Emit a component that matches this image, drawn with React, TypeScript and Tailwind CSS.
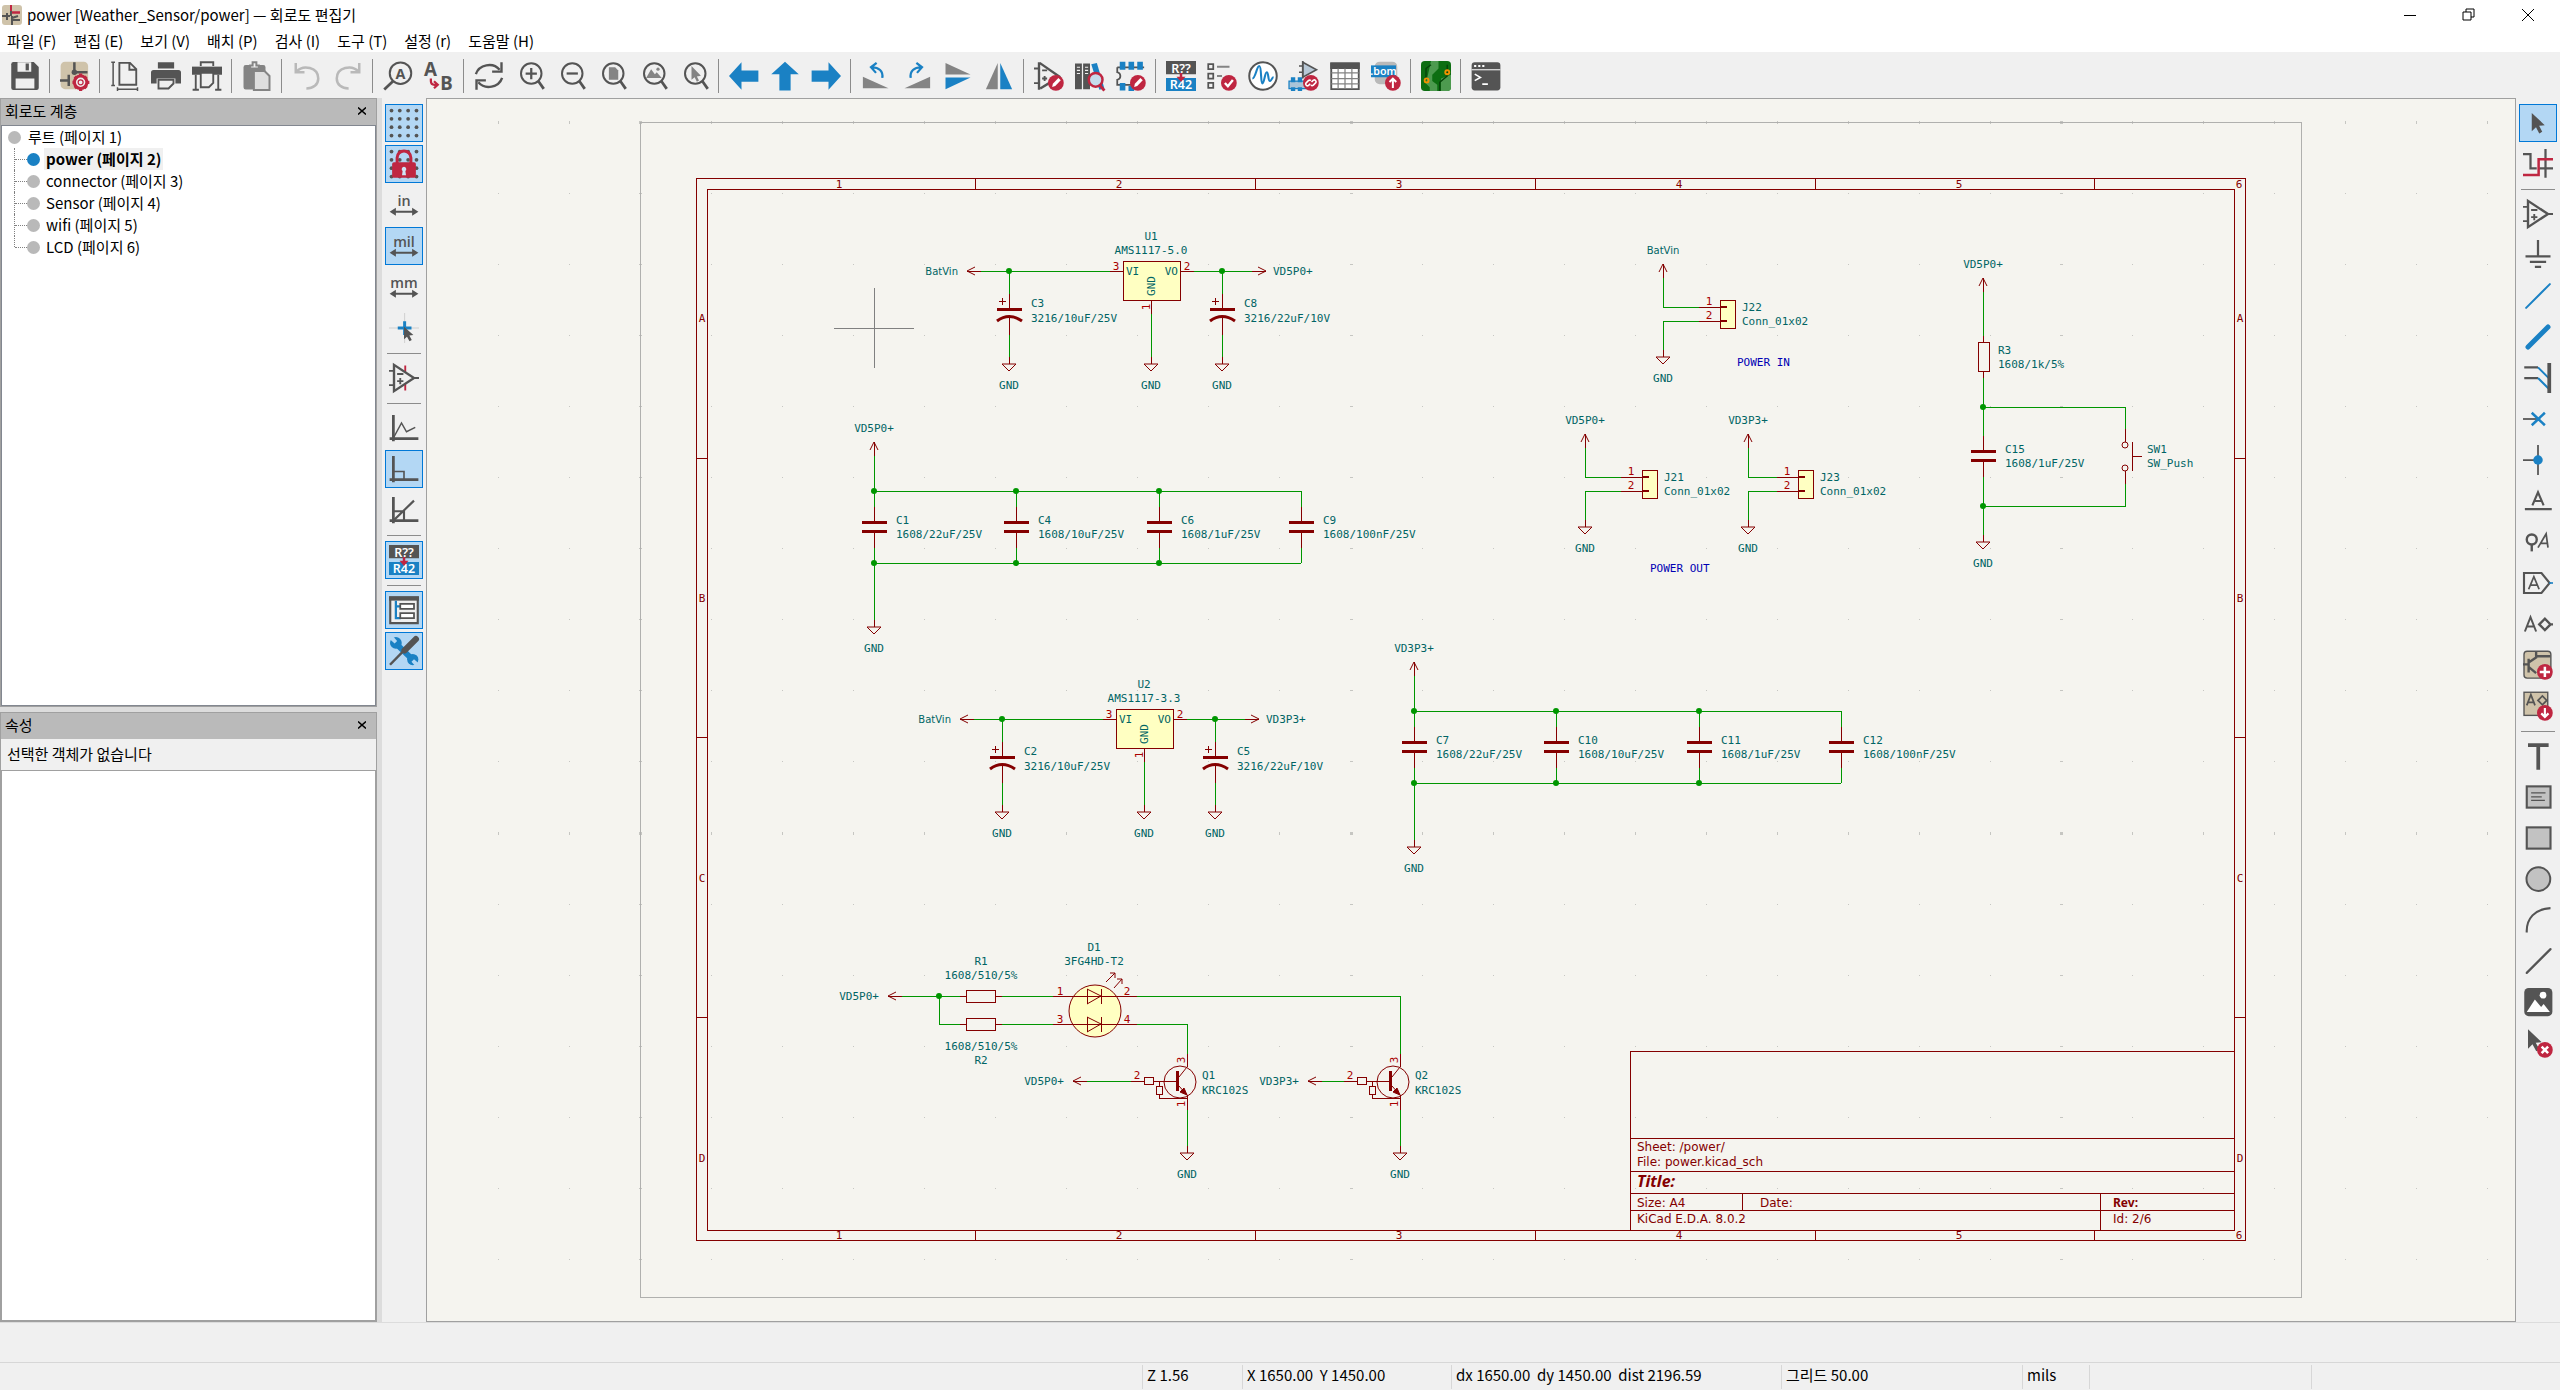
import React from "react";

const D = "#545454";
const B = "#1a81c4";
const R = "#bf2641";
const G = "#848484";
const L = "#b9b9b9";
const TAN = "#cfc3aa";

/* ------------------------------------------------------------------ */
/* Icons                                                               */
/* ------------------------------------------------------------------ */

function Ico({ children }: { children: React.ReactNode }) {
  return (
    <svg viewBox="0 0 24 24" className="size-[30px] shrink-0 overflow-visible" fill="none" stroke={D} strokeWidth={1.6} aria-hidden="true">
      {children}
    </svg>
  );
}

const Badge = ({ kind }: { kind: string }) => (
  <g>
    <circle cx="17.5" cy="17.5" r="6.3" fill={R} stroke="none" />
    {kind === "pencil" && <path d="M14.5 20.8l.6-2.6 4.4-4.6 1.9 1.8-4.4 4.6z" fill="#fff" stroke="none" />}
    {kind === "check" && <path d="M14.3 17.6l2.4 2.6 4-5" stroke="#fff" strokeWidth={1.9} />}
    {kind === "up" && <path d="M17.5 21.5v-7M14.8 16.8l2.7-2.7 2.7 2.7" stroke="#fff" strokeWidth={1.6} />}
    {kind === "down" && <path d="M17.5 13.5v7M14.6 17.9l2.9 2.9 2.9-2.9" stroke="#fff" strokeWidth={1.7} />}
    {kind === "plus" && <path d="M17.5 13.4v8.2M13.4 17.5h8.2" stroke="#fff" strokeWidth={2} />}
    {kind === "x" && <path d="M14.9 14.9l5.2 5.2M20.1 14.9l-5.2 5.2" stroke="#fff" strokeWidth={2} />}
    {kind === "link" && (
      <path d="M17 18.2l-1.5 1.5a1.5 1.5 0 01-2-2l2-2a1.5 1.5 0 012 0M18 16.8l1.5-1.5a1.5 1.5 0 012 2l-2 2a1.5 1.5 0 01-2 0" stroke="#fff" strokeWidth={1.3} />
    )}
  </g>
);

const Lens = () => (
  <g>
    <circle cx="13" cy="10" r="8.2" strokeWidth={1.6} />
    <path d="M18.6 16l4.4 6.3" strokeWidth={2.2} />
  </g>
);

const OpAmp = ({ pins }: { pins?: boolean }) => (
  <g>
    {pins && <path d="M13 2v20" stroke={R} strokeWidth={1.5} />}
    <path d="M4 1.5v21L20 12z" fill="#efefef" strokeWidth={1.9} />
    <path d="M0 6.3h4M0 17.7h4M20 12h4M6.5 8.8h5M6.5 14.5h5M9 12v5" strokeWidth={1.5} />
  </g>
);

const GridDots = () => (
  <g fill={D} stroke="none">
    {[2, 8.6, 15.3, 22].map((y) => [2, 8.6, 15.3, 22].map((x) => <circle key={`${x}-${y}`} cx={x} cy={y} r="1.5" />))}
  </g>
);

const Units = ({ label }: { label: string }) => (
  <g>
    <text x="12" y="12.6" textAnchor="middle" fontSize="11.5" fontWeight="600" fill={D} stroke="none" fontFamily="'Open Sans'">
      {label}
    </text>
    <path d="M3 17.4h18" strokeWidth={1.6} />
    <path d="M5.5 14.2L.5 17.4l5 3.2zM18.5 14.2l5 3.2-5 3.2z" fill={D} stroke="none" />
  </g>
);

const Annotate = () => (
  <g stroke="none" fontFamily="'Noto Sans'" fontWeight="600" fontSize="10">
    <rect width="24" height="10.6" fill={D} />
    <rect y="13.6" width="24" height="10.4" fill={B} />
    <text x="12" y="9.2" textAnchor="middle" fill="#fff">R??</text>
    <text x="12" y="22.6" textAnchor="middle" fill="#fff">R42</text>
    <path d="M11 9.5h2v3h2.6L12 16.8 8.4 12.5H11z" fill={R} />
  </g>
);

const Axes = () => <path d="M3.5 1.5v21M.5 20.5h23" strokeWidth={2.2} />;
const Cursor = () => <path d="M7 4v14.5l3.4-3.2 2.6 5 2.4-1.3-2.5-4.8 4.5-.5z" fill={D} stroke="none" />;

const icons: Record<string, React.ReactNode> = {
  save: (
    <>
      <path d="M1 2.5Q1 .8 2.700 .8H19l4 4v16.700q0 1.700-1.700 1.700H2.700Q1 23.200 1 21.500z" fill={D} stroke="none" />
      <path d="M6 1h11v7.500H6zM4.500 14h15v8h-15z" fill="#efefef" stroke="none" />
      <path d="M12.500 2h2.600v5.500h-2.600z" fill={D} stroke="none" />
    </>
  ),
  settings: (
    <>
      <rect x=".5" y=".5" width="22" height="22" rx="3.500" fill={TAN} stroke="none" />
      <path d="M11.500 1v9M11.500 9H22M0 15.500h8M7 11v9" strokeWidth={2} />
      <circle cx="11.500" cy="9" r="2.200" fill={D} stroke="none" />
      <g stroke={R}>
        <circle cx="16.500" cy="17" r="5" fill="#efefef" stroke={R} strokeWidth={2.500} />
        <path d="M16.500 10v2.500M16.500 21.500V24M10 17h2M21 17h2.500M11.800 12.500l1.800 1.600M19.400 20l1.800 1.600M21.200 12.500l-1.800 1.600M13.600 20l-1.800 1.600" strokeWidth={2.600} />
        <circle cx="16.500" cy="17" r="2" fill="#efefef" strokeWidth={1} />
      </g>
    </>
  ),
  page: (
    <>
      <path d="M7.500 1.500h8.500l5 5v12.500H7.500zM15.500 1.500v5.500H21" strokeWidth={1.500} />
      <path d="M2.500 1v18.500M1 1h3M1 19.500h3M6 22.500h16M6 21v3M22 21v3" strokeWidth={1.200} />
    </>
  ),
  print: (
    <>
      <path d="M5.500 1h13v5h-13z" fill={D} stroke="none" />
      <path d="M2 7.200h20q2 0 2 2V18h-4.500v-4h-15v4H0V9.200q0-2 2-2z" fill={D} stroke="none" />
      <path d="M6 15v7h8l4-4v-3z" fill="#efefef" strokeWidth={1.500} />
    </>
  ),
  plot: (
    <>
      <path d="M7 4V1h10v3" strokeWidth={1.500} />
      <path d="M0 4.500h24V11H0z" fill={D} stroke="none" />
      <path d="M3 11v12M21 11v12M.5 23h5M18.500 23h5" strokeWidth={1.500} />
      <path d="M7 9.500h10v8L13.500 21H7z" fill="#efefef" strokeWidth={1.500} />
    </>
  ),
  paste: (
    <>
      <rect x="2" y="4" width="16" height="18" rx="1" fill={G} stroke={G} />
      <path d="M6.500 6V3.500h2V1h3v2.500h2V6z" fill="#efefef" stroke={G} />
      <path d="M9.500 8h8.500l4 4v11.200H9.500z" fill="#dedede" stroke={G} />
    </>
  ),
  undo: <path d="M3 1.500v7.500h7M3.500 8.500C9 2.500 21 5 21 14c0 5-4 8-9.500 8" stroke={L} strokeWidth={2} />,
  redo: <path d="M21 1.500v7.500h-7M20.500 8.500C15 2.500 3 5 3 14c0 5 4 8 9.500 8" stroke={L} strokeWidth={2} />,
  find: (
    <>
      <circle cx="14" cy="9.700" r="8.600" />
      <path d="M8 16.200L1 22.800" strokeWidth={2.200} />
      <text x="14" y="14" textAnchor="middle" fontSize="11.500" fontWeight="700" fill={D} stroke="none" fontFamily="'Noto Sans'">A</text>
    </>
  ),
  replace: (
    <>
      <g fill={D} stroke="none" fontWeight="700" fontFamily="'Noto Sans'" fontSize="15">
        <text x="0" y="12">A</text>
        <text x="13" y="23.500">B</text>
      </g>
      <path d="M5.500 14v2q0 3 3 3h1.500M8 16.200l3 2.800-3 2.800" stroke={R} strokeWidth={1.800} />
    </>
  ),
  refresh: (
    <>
      <path d="M1.500 10.500C4 3 15 .5 20.500 7M22.500 13.500C20 21 9 23.500 3.500 17" strokeWidth={1.900} />
      <path d="M22 1v7.500h-7.500M2 23v-7.500h7.500" strokeWidth={1.900} />
    </>
  ),
  zoomIn: (<><Lens /><path d="M13 5.500v9M8.500 10h9" strokeWidth={1.800} /></>),
  zoomOut: (<><Lens /><path d="M8.500 10h9" strokeWidth={1.800} /></>),
  zoomFit: (<><Lens /><path d="M9.500 5h5l2.500 2.500V15H9.500z" fill={G} stroke="none" /></>),
  zoomObj: (<><Lens /><path d="M6.500 13.500l4-7 3 4 1.500-1.500 4 4.500z" fill={G} stroke="none" /><circle cx="16" cy="6.500" r="1.300" fill={G} stroke="none" /></>),
  zoomSel: (<><Lens /><path d="M10 4v11l2.500-2 1.800 3.500 1.700-1-1.700-3.200 3.200-.5z" fill={G} stroke="none" /></>),
  left: <path d="M0 12L10 1v6.500h13.500v9H10V23z" fill={B} stroke="none" />,
  up: <path d="M12 .5L23 10.500h-6.500V23.500h-9V10.500H1z" fill={B} stroke="none" />,
  right: <path d="M24 12L14 1v6.500H.5v9H14V23z" fill={B} stroke="none" />,
  rotL: (<><path d="M1.500 12.500L22 21.700H1.500z" fill={G} stroke="none" /><path d="M17 13.500C18 8 14 5 9 5M12.500 1.500L8 5l4 4.500" stroke={B} strokeWidth={1.800} /></>),
  rotR: (<><path d="M22.500 12.500L2 21.700h20.500z" fill={G} stroke="none" /><path d="M7 13.500C6 8 10 5 15 5M11.500 1.500L16 5l-4 4.500" stroke={B} strokeWidth={1.800} /></>),
  mirV: (<><path d="M2 1.500v9.300h20z" fill={G} stroke="none" /><path d="M2 22.500v-9.300h20z" fill={B} stroke="none" /></>),
  mirH: (<><path d="M1.500 22.500H11V1.500z" fill={G} stroke="none" /><path d="M22.500 22.500H13V1.500z" fill={B} stroke="none" /></>),
  symEdit: (
    <>
      <path d="M4 1v22M4.500 1.500L21 13M5 22l9-5.500" strokeWidth={1.900} />
      <path d="M0 6h4M0 17.700h4M6.500 7.500h4M6.500 14h4M8.500 12v4" strokeWidth={1.500} />
      <Badge kind="pencil" />
    </>
  ),
  lib: (
    <>
      <path d="M0 2h5.500v20.500H0zM6.500 2H12v20.500H6.500z" fill={D} stroke="none" />
      <path d="M13 2.500l4.500-1L23.500 22l-4 1z" fill={B} stroke="none" />
      <path d="M1.500 5h2.500M1.500 7.500h2.500M1.500 10h2.500M8 5h2.500M8 7.500h2.500M8 10h2.500" stroke="#efefef" strokeWidth={0.900} />
      <circle cx="16.500" cy="15" r="5.500" fill="#c5dcec" stroke={R} strokeWidth={2} />
      <path d="M20 19.500l3.500 4.200" stroke={R} strokeWidth={2.400} />
    </>
  ),
  fpEdit: (
    <>
      <path d="M1 5h21.500M1 5v4q2.500.5 2.500 3T1 15v4h11" strokeWidth={1.400} />
      <path d="M3 .5h4.500v6.500H3zM10 .5h4.500v6.500H10zM17 .5h4.500v6.500H17zM3 17.500h4.500v6H3zM10 20h4.500v4H10z" fill={B} stroke="none" />
      <Badge kind="pencil" />
    </>
  ),
  annotate: <Annotate />,
  erc: (
    <>
      <path d="M1 2.500h4v4H1zM1 10h4v4H1zM1 17.500h4v4H1z" strokeWidth={1.400} />
      <path d="M8 4.500h10M8 12h4" strokeWidth={1.600} stroke={G} />
      <Badge kind="check" />
    </>
  ),
  sim: (
    <>
      <circle cx="12" cy="12" r="11" fill="#fff" />
      <path d="M3.500 14C6 14 7 4 9 4s1 14 2.500 14S13.500 9 15 9s1 7 2.500 7 1.500-3 3-3" stroke={B} strokeWidth={1.700} />
    </>
  ),
  assign: (
    <>
      <path d="M11 1l11 6-11 6z" fill="#b8c8d6" stroke={D} strokeWidth={1.300} />
      <path d="M11 0v14M8 4h3M8 9h3" strokeWidth={1.300} />
      <path d="M0 16h14v6H0z" fill="#a9c4d8" stroke={B} strokeWidth={1} />
      <path d="M1.500 13H5v4H1.500zM7 13h3.500v4H7zM1.500 21H5v3H1.500zM7 21h3.500v3H7z" fill={B} stroke="none" />
      <Badge kind="link" />
    </>
  ),
  table: (
    <>
      <path d="M1 2h22v20.500H1z" fill="#fff" strokeWidth={1.500} />
      <path d="M1 2h22v3.500H1z" fill={D} />
      <path d="M1 9.500h22M1 14h22M1 18.300h22M6.500 6v16M12 6v16M17.500 6v16" strokeWidth={1} stroke={G} />
    </>
  ),
  bom: (
    <>
      <rect x="3" y=".5" width="18" height="18" rx="4" fill={L} stroke="none" />
      <rect y="3.500" width="20" height="9.500" fill={B} stroke="none" />
      <text x="10" y="11.200" textAnchor="middle" fontSize="8.500" fontWeight="600" fill="#fff" stroke="none" fontFamily="'Noto Sans'">.bom</text>
      <Badge kind="up" />
    </>
  ),
  pcb: (
    <>
      <rect width="24" height="24" rx="3" fill="#0d6e12" stroke="none" />
      <path d="M8 0h6v6l-5 5v5l4 3v5H7v-3l-3-3zM16 14l8-3v10q0 3-3 3h-5z" fill="#4d9a4f" stroke="none" />
      <path d="M4 14V6l4-3M15 24v-7l6-5V3" stroke="#06450a" strokeWidth={1.200} />
      <circle cx="21" cy="9" r="1.600" stroke="#f29100" strokeWidth={1.500} />
      <circle cx="4.500" cy="15.500" r="1.600" stroke="#f29100" strokeWidth={1.500} />
    </>
  ),
  console: (
    <>
      <rect x=".5" y="1" width="23" height="22.500" rx="2.500" fill={D} stroke="none" />
      <path d="M.5 7h23" stroke="#efefef" strokeWidth={0.900} />
      <path d="M2.500 4h1.700M5.800 4h1.700M9 4h1.700" stroke="#fff" strokeWidth={1.500} />
      <path d="M3 10.500l4.500 2.600L3 15.700M9 18.500h4.500" stroke="#fff" strokeWidth={1.300} />
    </>
  ),
  grid: <GridDots />,
  gridLock: (
    <>
      <GridDots />
      <path d="M6.500 11.500V7a5.500 5.500 0 0111 0v4.500" stroke={R} strokeWidth={2.400} />
      <rect x="2.500" y="10.500" width="19" height="12.500" rx="1.500" fill={R} stroke="none" />
      <path d="M12 14.200a1.900 1.900 0 011.100 3.400l.5 3.400h-3.200l.5-3.400A1.900 1.900 0 0112 14.200z" fill="#cfe4f7" stroke="none" />
    </>
  ),
  inch: <Units label="in" />,
  mil: <Units label="mil" />,
  mm: <Units label="mm" />,
  cross: (
    <>
      <path d="M0 12h24M12.500 0v24" stroke="#d0d0d0" strokeWidth={0.800} />
      <path d="M7 12h11M12.500 6.500v11" stroke={B} strokeWidth={2.400} />
      <path d="M12 11v10l2.400-2 2 3.500 1.800-1-1.900-3.500 3.200-.5z" fill={D} stroke="none" />
    </>
  ),
  hidden: <OpAmp pins />,
  free: (<><Axes /><path d="M3.500 20l6.500-12 4 7 7-3.500" strokeWidth={1.200} /></>),
  deg90: (<><Axes /><path d="M4 14h8v6" strokeWidth={1.300} /></>),
  deg45: (<><Axes /><path d="M3.500 20.500L20 4.500M4 13h8v7" strokeWidth={1.700} /></>),
  tree: (
    <>
      <path d="M1 2h22v20.500H1z" fill="#efefef" strokeWidth={1.700} />
      <path d="M0 1h24v3.500H0z" fill={D} stroke="none" />
      <path d="M5.500 4.500v14h4M5.500 9h4" stroke={B} strokeWidth={1.800} />
      <path d="M9 7h11v4H9zM9 14.500h11v4H9z" fill="#fff" strokeWidth={1.400} />
    </>
  ),
  tools: (
    <>
      <path d="M6 6.500L18.500 18.500" stroke={B} strokeWidth={4.500} />
      <circle cx="5.500" cy="5.500" r="4.700" fill={B} stroke="none" />
      <path d="M0 2l4.500 4 2-2L3 0z" fill="#b3d7f4" stroke="none" />
      <circle cx="19" cy="18.800" r="4.500" fill={B} stroke="none" />
      <path d="M24 22l-4-3.500-2 2 3.500 4z" fill="#b3d7f4" stroke="none" />
      <path d="M.8 23L13 10.500" strokeWidth={2} />
      <path d="M12.500 11.500L21.500 2.500" strokeWidth={5} strokeLinecap="round" />
    </>
  ),
  select: <Cursor />,
  highlight: (
    <>
      <path d="M0 4h6v11.500h5M18 0v23M13 15.500h11" strokeWidth={1.800} />
      <path d="M0 20.800h12.500V8.200H24" stroke={R} strokeWidth={2} />
    </>
  ),
  symbol: <OpAmp />,
  gnd: <path d="M12 0v13M2 13h20M5.500 17.500h13M9.500 21.500h5" strokeWidth={1.800} />,
  wire: <path d="M2.500 21.500l19-19" stroke={B} strokeWidth={1.600} strokeLinecap="round" />,
  bus: <path d="M4 20L20 4" stroke={B} strokeWidth={4} strokeLinecap="round" />,
  entry: (
    <>
      <path d="M1 3.500h11M1 12h11" strokeWidth={1.800} />
      <path d="M12 3.500l9 9M12 12l9 9" stroke={B} strokeWidth={1.600} />
      <path d="M21 0v24" strokeWidth={3} />
    </>
  ),
  nc: (<><path d="M0 12h12" strokeWidth={1.400} /><path d="M7 7l10.500 10M17.500 7L7 17" stroke={B} strokeWidth={2} /></>),
  junction: (<><path d="M12 0v24M0 12h12" strokeWidth={1.400} /><circle cx="12" cy="12" r="3.800" fill={B} stroke="none" /></>),
  label: (
    <>
      <path d="M1.500 18.500h21.500" strokeWidth={1.800} />
      <path d="M7.500 15.500L12 5l4.500 10.500M9 12h6" strokeWidth={1.700} />
    </>
  ),
  netclass: (
    <>
      <circle cx="7" cy="10" r="4" strokeWidth={1.900} />
      <path d="M7 14v5.500" strokeWidth={1.900} />
      <path d="M12 16.500L18.500 5.500l1.500 11M14.500 13h5" strokeWidth={1.400} />
    </>
  ),
  glabel: (
    <>
      <path d="M.8 4h14l6.500 8-6.500 8H.8z" strokeWidth={1.700} />
      <path d="M21 12h3" stroke={B} strokeWidth={1.300} />
      <path d="M4.500 17L8.700 7l4.200 10M6 13.700h5.500" strokeWidth={1.400} />
    </>
  ),
  hlabel: (
    <>
      <path d="M1.500 18L6 6.500 10.500 18M3 14h6" strokeWidth={1.600} />
      <path d="M13 12.300L17.500 7.800 22 12.300 17.500 16.800zM22 12.300h2" strokeWidth={1.900} />
    </>
  ),
  sheet: (
    <>
      <rect x=".8" y="1" width="21.500" height="21.500" rx="2.500" fill={TAN} strokeWidth={1.100} />
      <path d="M10.500 1v5.500M10.500 5H22M4.500 7v11M0 11.500h4.500M4.500 10l6-4M4.500 13.500l6 5" strokeWidth={1.900} />
      <Badge kind="plus" />
    </>
  ),
  importPin: (
    <>
      <rect x=".8" y="1" width="19" height="18.500" fill={TAN} strokeWidth={1.100} />
      <path d="M3 11.500L6.300 3l3.300 8.500M4 9h4.500" strokeWidth={1.400} />
      <path d="M12 7.500L15.500 4 19 7.500 15.500 11z" strokeWidth={1.400} />
      <Badge kind="down" />
    </>
  ),
  text: <path d="M4 3.200h16.500M12.200 3v20" strokeWidth={3} />,
  textbox: (
    <>
      <rect x="3" y="3.500" width="19" height="17" fill="#c2c2c2" strokeWidth={1.700} />
      <path d="M6.500 8.700h11.500M6.500 11.800h8.500M6.500 14.600h11" strokeWidth={1} />
    </>
  ),
  rect: <rect x="3" y="3.500" width="19" height="17" fill="#c2c2c2" strokeWidth={1.700} />,
  circle: <circle cx="12.300" cy="12" r="9.500" fill="#c2c2c2" strokeWidth={1.600} />,
  arc: <path d="M3 22C2.500 11 9.500 3 22 2.500" strokeWidth={1.700} />,
  line: <path d="M3 21.500l19-19" strokeWidth={1.700} strokeLinecap="round" />,
  image: (
    <>
      <rect x="1" y=".8" width="22.500" height="22.500" rx="3.500" fill={D} stroke="none" />
      <path d="M3 20l6.500-10 5 6 2-2.500L21.500 20z" fill="#fff" stroke="none" />
      <circle cx="16" cy="6.500" r="2.700" fill="#fff" stroke="none" />
    </>
  ),
  del: (
    <>
      <path d="M4 1v15.500l3.600-3.500 3 5.500 2.600-1.400-3-5.300 4.800-.5z" fill={D} stroke="none" />
      <Badge kind="x" />
    </>
  ),
};

/* ------------------------------------------------------------------ */
/* Toolbars                                                            */
/* ------------------------------------------------------------------ */

type Tool = [string, string] | null;

const topTools: Tool[] = [
  ["save", "저장"], null,
  ["settings", "회로도 설정"], null,
  ["page", "페이지 설정"], ["print", "인쇄"], ["plot", "플롯"], null,
  ["paste", "붙여넣기"], null,
  ["undo", "실행 취소"], ["redo", "다시 실행"], null,
  ["find", "찾기"], ["replace", "바꾸기"], null,
  ["refresh", "새로 고침"], ["zoomIn", "확대"], ["zoomOut", "축소"], ["zoomFit", "화면 맞춤"], ["zoomObj", "객체 맞춤"], ["zoomSel", "선택 확대"], null,
  ["left", "뒤로"], ["up", "위로"], ["right", "앞으로"], null,
  ["rotL", "반시계 회전"], ["rotR", "시계 회전"], ["mirV", "수직 반전"], ["mirH", "수평 반전"], null,
  ["symEdit", "심볼 편집기"], ["lib", "심볼 탐색"], ["fpEdit", "풋프린트 편집기"], null,
  ["annotate", "주석 달기"], ["erc", "ERC"], ["sim", "시뮬레이터"], ["assign", "풋프린트 할당"], ["table", "필드 표"], ["bom", "BOM"], null,
  ["pcb", "PCB 편집기"], null,
  ["console", "스크립트 콘솔"],
];

const leftTools: Tool[] = [
  ["grid", "그리드"], ["gridLock", "그리드 고정"], ["inch", "인치"], ["mil", "밀"], ["mm", "밀리미터"], ["cross", "커서"], null,
  ["hidden", "숨겨진 핀"], null,
  ["free", "자유 각도"], ["deg90", "90도"], ["deg45", "45도"], null,
  ["annotate", "자동 주석"], null,
  ["tree", "계층"], ["tools", "속성"],
];

const rightTools: Tool[] = [
  ["select", "선택"], ["highlight", "네트 강조"], null,
  ["symbol", "심볼 추가"], ["gnd", "전원 추가"], ["wire", "와이어"], ["bus", "버스"], ["entry", "버스 엔트리"], ["nc", "연결 없음"],
  ["junction", "접점"], ["label", "레이블"], ["netclass", "네트 클래스"], ["glabel", "전역 레이블"], ["hlabel", "계층 레이블"],
  ["sheet", "시트"], ["importPin", "시트 핀"], null,
  ["text", "텍스트"], ["textbox", "텍스트 상자"], ["rect", "사각형"], ["circle", "원"], ["arc", "호"], ["line", "선"], ["image", "이미지"], ["del", "삭제"],
];

const activeTools = new Set(["grid", "gridLock", "mil", "deg90", "annotate", "tree", "tools", "select"]);

function SideBar({ tools, label }: { tools: Tool[]; label: string }) {
  return (
    <div role="toolbar" aria-label={label} className="flex w-11 shrink-0 flex-col items-center gap-[3px] bg-[#f0f0f0] pt-1.5">
      {tools.map((t, i) =>
        t ? (
          <button
            key={i}
            type="button"
            aria-label={t[1]}
            className={
              activeTools.has(t[0])
                ? "flex size-[38px] shrink-0 items-center justify-center border border-[#0078d7] bg-[#b3d7f4]"
                : "flex size-[38px] shrink-0 items-center justify-center"
            }
          >
            <Ico>{icons[t[0]]}</Ico>
          </button>
        ) : (
          <div key={i} className="mt-[3px] mb-0.5 h-px w-[34px] shrink-0 bg-[#8c8c8c]" />
        ),
      )}
    </div>
  );
}

/* ------------------------------------------------------------------ */
/* Schematic                                                           */
/* ------------------------------------------------------------------ */

const WIRE = "#009600";
const SYM = "#840000";
const TEAL = "#006464";
const PIN = "#a90000";
const BODY = "#ffffc2";
const MONO = "'DejaVu Sans Mono', monospace";
const SANS = "'DejaVu Sans', sans-serif";

const W = ({ d }: { d: string }) => <path d={d} stroke={WIRE} fill="none" shapeRendering="crispEdges" />;
const S = ({ d }: { d: string }) => <path d={d} stroke={SYM} fill="none" shapeRendering="crispEdges" />;
const Dot = ({ x, y }: { x: number; y: number }) => <circle cx={x} cy={y} r="3" fill={WIRE} />;

function T({ x, y, a = "start", c = TEAL, children }: { x: number; y: number; a?: "start" | "middle" | "end"; c?: string; children: string }) {
  const narrow = children === "BatVin";
  return (
    <text x={x} y={y} textAnchor={a} fill={c} fontFamily={narrow ? SANS : MONO} fontSize={narrow ? 10 : 11}>
      {children}
    </text>
  );
}

const V = ({ x, y, c = PIN, children }: { x: number; y: number; c?: string; children: string }) => (
  <text textAnchor="middle" fill={c} fontFamily={MONO} fontSize={11} transform={`translate(${x} ${y}) rotate(-90)`}>
    {children}
  </text>
);

function Gnd({ x, y }: { x: number; y: number }) {
  return (
    <g>
      <S d={`M${x} ${y}v7`} />
      <path d={`M${x - 7} ${y + 7}h14l-7 7z`} stroke={SYM} fill="none" />
      <T x={x} y={y + 32} a="middle">GND</T>
    </g>
  );
}

function PowerUp({ x, y, name }: { x: number; y: number; name: string }) {
  return (
    <g>
      <S d={`M${x} ${y}v-14`} />
      <path d={`M${x - 4} ${y - 6}l4 -8l4 8`} stroke={SYM} fill="none" />
      <T x={x} y={y - 24} a="middle">{name}</T>
    </g>
  );
}

function PowerLeft({ x, y, name }: { x: number; y: number; name: string }) {
  return (
    <g>
      <S d={`M${x} ${y}h-14`} />
      <path d={`M${x - 6} ${y - 4}l-8 4l8 4`} stroke={SYM} fill="none" />
      <T x={x - 23} y={y + 4} a="end">{name}</T>
    </g>
  );
}

function Cap({ x, y, name, value }: { x: number; y: number; name: string; value: string }) {
  return (
    <g>
      <S d={`M${x} ${y}v14M${x} ${y + 26}v15`} />
      <path d={`M${x - 12} ${y + 14}h25v3h-25zM${x - 12} ${y + 23}h25v3h-25z`} fill={SYM} />
      <T x={x + 22} y={y + 17}>{name}</T>
      <T x={x + 22} y={y + 31}>{value}</T>
    </g>
  );
}

function PolCap({ x, y, name, value }: { x: number; y: number; name: string; value: string }) {
  return (
    <g>
      <S d={`M${x} ${y}v14M${x} ${y + 24}v17M${x - 10} ${y + 7}h7M${x - 7} ${y + 4}v7`} />
      <path d={`M${x - 12} ${y + 14}h25v3h-25z`} fill={SYM} />
      <path d={`M${x - 12} ${y + 27}q12 -9 25 0`} stroke={SYM} strokeWidth="3" fill="none" />
      <W d={`M${x} ${y - 23}v23M${x} ${y + 41}v22`} />
      <Gnd x={x} y={y + 63} />
      <Dot x={x} y={y - 23} />
      <T x={x + 22} y={y + 13}>{name}</T>
      <T x={x + 22} y={y + 28}>{value}</T>
    </g>
  );
}

function Regulator({ dx, dy, u, part, cin, cout, out }: { dx: number; dy: number; u: string; part: string; cin: string; cout: string; out: string }) {
  return (
    <g transform={`translate(${dx} ${dy})`}>
      <PowerLeft x={981} y={271} name="BatVin" />
      <W d="M981 271H1110M1194 271H1252M1151 314V357" />
      <S d="M1110 271H1123M1180 271H1194M1151 300V314M1252 271H1266" />
      <path d="M1258 267l8 4l-8 4" stroke={SYM} fill="none" />
      <rect x="1123" y="261" width="57" height="39" fill={BODY} stroke={SYM} shapeRendering="crispEdges" />
      <T x={1273} y={275}>{out}</T>
      <T x={1151} y={240} a="middle">{u}</T>
      <T x={1151} y={254} a="middle">{part}</T>
      <T x={1116} y={270} a="middle" c={PIN}>3</T>
      <T x={1187} y={270} a="middle" c={PIN}>2</T>
      <T x={1126} y={275}>VI</T>
      <T x={1178} y={275} a="end">VO</T>
      <V x={1155} y={286} c={TEAL}>GND</V>
      <V x={1150} y={307}>1</V>
      <Gnd x={1151} y={357} />
      <PolCap x={1009} y={294} name={cin} value="3216/10uF/25V" />
      <PolCap x={1222} y={294} name={cout} value="3216/22uF/10V" />
    </g>
  );
}

function Bank({ dx, dy, rail, names }: { dx: number; dy: number; rail: string; names: string[] }) {
  const xs = [874, 1016, 1159, 1301];
  const values = ["1608/22uF/25V", "1608/10uF/25V", "1608/1uF/25V", "1608/100nF/25V"];
  return (
    <g transform={`translate(${dx} ${dy})`}>
      <PowerUp x={874} y={456} name={rail} />
      <W d="M874 456V491H1301M874 563H1301M874 563V620" />
      {xs.map((x, i) => (
        <g key={x}>
          <W d={`M${x} 491V507M${x} 548V563`} />
          <Cap x={x} y={507} name={names[i]} value={values[i]} />
          {i < 3 && <Dot x={x} y={491} />}
          {i < 3 && <Dot x={x} y={563} />}
        </g>
      ))}
      <Gnd x={874} y={620} />
    </g>
  );
}

function Connector({ x, y, wx, name, rail }: { x: number; y: number; wx: number; name: string; rail: string }) {
  return (
    <g>
      <PowerUp x={wx} y={y - 29} name={rail} />
      <W d={`M${wx} ${y - 29}V${y}H${x - 21}M${x - 21} ${y + 14}H${wx}V${y + 43}`} />
      <Gnd x={wx} y={y + 43} />
      <rect x={x} y={y - 7} width="15" height="28" fill={BODY} stroke={SYM} shapeRendering="crispEdges" />
      <S d={`M${x - 21} ${y}h21M${x - 21} ${y + 14}h21`} />
      <path d={`M${x} ${y - 1}h7v2h-7zM${x} ${y + 13}h7v2h-7z`} fill={SYM} />
      <T x={x - 11} y={y - 2} a="middle" c={PIN}>1</T>
      <T x={x - 11} y={y + 12} a="middle" c={PIN}>2</T>
      <T x={x + 22} y={y + 4}>{name}</T>
      <T x={x + 22} y={y + 18}>Conn_01x02</T>
    </g>
  );
}

function Transistor({ dx, name }: { dx: number; name: string }) {
  return (
    <g transform={`translate(${dx} 0)`}>
      <W d="M1187 1110V1146" />
      <S d="M1131 1081H1144M1154 1081H1178M1159 1081V1086M1159 1094V1098H1187M1187 1067V1054M1187 1095V1110" />
      <path d="M1144 1077h9v7h-9zM1156 1086h6v8h-6z" stroke={SYM} fill="none" shapeRendering="crispEdges" />
      <circle cx="1180" cy="1082" r="16" stroke={SYM} fill="none" />
      <path d="M1176 1071h3v20h-3z" fill={SYM} />
      <path d="M1179 1077L1187 1067M1179 1086L1187 1095" stroke={SYM} />
      <path d="M1187 1095l-7 -3l4 -4z" fill={SYM} stroke={SYM} />
      <V x={1185} y={1060}>3</V>
      <V x={1185} y={1104}>1</V>
      <T x={1137} y={1079} a="middle" c={PIN}>2</T>
      <T x={1202} y={1079}>{name}</T>
      <T x={1202} y={1094}>KRC102S</T>
      <Gnd x={1187} y={1146} />
    </g>
  );
}

const LedResistor = ({ y }: { y: number }) => (
  <g>
    <W d={`M939 ${y}H960M1002 ${y}H1053`} />
    <S d={`M960 ${y}H967M995 ${y}H1002`} />
    <rect x="966" y={y - 6} width="29" height="12" stroke={SYM} fill="none" shapeRendering="crispEdges" />
  </g>
);

const LedHalf = ({ y }: { y: number }) => (
  <g>
    <S d={`M1053 ${y}H1137M1101 ${y - 7}v15M1087 ${y - 7}v15`} />
    <path d={`M1087 ${y - 7}l14 7l-14 8`} stroke={SYM} fill="none" />
  </g>
);

function GridPoints() {
  const pts: React.ReactNode[] = [];
  for (let i = -2; i <= 26; i++) {
    for (let j = 0; j <= 16; j++) {
      const x = Math.round(640 + (i * 1421) / 20);
      const y = Math.round(122 + (j * 1421) / 20);
      const w = i % 10 === 0 ? 3 : 1;
      const h = j % 10 === 0 ? 3 : 1;
      pts.push(<rect key={`${i}-${j}`} x={x - (w - 1) / 2} y={y - (h - 1) / 2} width={w} height={h} />);
    }
  }
  return <g fill="#c6c6c2">{pts}</g>;
}

function Frame() {
  const F = (x: number, y: number, s: string) => (
    <text key={`${s}-${x}-${y}`} x={x} y={y} fill={SYM} fontFamily={SANS} fontSize={12}>{s}</text>
  );
  return (
    <g>
      <rect x="640" y="122" width="1661" height="1175" fill="none" stroke="#b0b0ae" shapeRendering="crispEdges" />
      <g fill="none" stroke={SYM} shapeRendering="crispEdges">
        <rect x="696" y="178" width="1549" height="1062" />
        <rect x="707" y="189" width="1527" height="1041" />
        {[975, 1255, 1535, 1815, 2094].map((x) => <path key={x} d={`M${x} 178v11M${x} 1230v10`} />)}
        {[458, 737, 1017].map((y) => <path key={y} d={`M696 ${y}h11M2234 ${y}h11`} />)}
        <path d="M1630 1230V1051H2234M1630 1138H2234M1630 1171H2234M1630 1193H2234M1630 1210H2234M1742 1193V1210M2100 1193V1230" />
      </g>
      {["1", "2", "3", "4", "5", "6"].map((n, i) => (
        <g key={n}>
          <T x={839 + i * 280} y={188} a="middle" c={SYM}>{n}</T>
          <T x={839 + i * 280} y={1239} a="middle" c={SYM}>{n}</T>
        </g>
      ))}
      {["A", "B", "C", "D"].map((n, i) => (
        <g key={n}>
          <T x={702} y={322 + i * 280} a="middle" c={SYM}>{n}</T>
          <T x={2240} y={322 + i * 280} a="middle" c={SYM}>{n}</T>
        </g>
      ))}
      {F(1637, 1151, "Sheet: /power/")}
      {F(1637, 1166, "File: power.kicad_sch")}
      {F(1637, 1207, "Size: A4")}
      {F(1760, 1207, "Date:")}
      {F(1637, 1223, "KiCad E.D.A. 8.0.2")}
      {F(2113, 1223, "Id: 2/6")}
      <text x="1637" y="1187" fill={SYM} fontFamily="'Noto Sans'" fontSize="16" fontWeight="700" fontStyle="italic">Title:</text>
      <text x="2113" y="1207" fill={SYM} fontFamily="'Noto Sans'" fontSize="12" fontWeight="700">Rev:</text>
    </g>
  );
}

function Schematic() {
  return (
    <svg viewBox="427 99 2088 1222" className="block size-full" role="img" aria-label="power 회로도">
      <GridPoints />
      <Frame />
      <path d="M834 328H914M874 288V368" stroke="#808080" shapeRendering="crispEdges" />
      <Regulator dx={0} dy={0} u="U1" part="AMS1117-5.0" cin="C3" cout="C8" out="VD5P0+" />
      <Regulator dx={-7} dy={448} u="U2" part="AMS1117-3.3" cin="C2" cout="C5" out="VD3P3+" />
      <Bank dx={0} dy={0} rail="VD5P0+" names={["C1", "C4", "C6", "C9"]} />
      <Bank dx={540} dy={220} rail="VD3P3+" names={["C7", "C10", "C11", "C12"]} />

      <Connector x={1720} y={307} wx={1663} name="J22" rail="BatVin" />
      <Connector x={1642} y={477} wx={1585} name="J21" rail="VD5P0+" />
      <Connector x={1798} y={477} wx={1748} name="J23" rail="VD3P3+" />
      <T x={1737} y={366} c="#0000b4">POWER IN</T>
      <T x={1650} y={572} c="#0000b4">POWER OUT</T>

      <PowerUp x={1983} y={292} name="VD5P0+" />
      <W d="M1983 292V336M1983 378V436M1983 477V535M1983 407H2125V429M1983 506H2125V484" />
      <S d="M1983 336V342M1983 371V378M2125 429V442M2125 471V484M2132 442V471M2132 456H2142" />
      <rect x="1978" y="342" width="11" height="29" stroke={SYM} fill="none" shapeRendering="crispEdges" />
      <T x={1998} y={354}>R3</T>
      <T x={1998} y={368}>1608/1k/5%</T>
      <Cap x={1983} y={436} name="C15" value="1608/1uF/25V" />
      <Dot x={1983} y={407} />
      <Dot x={1983} y={506} />
      <circle cx="2125" cy="445" r="3" stroke={SYM} fill="none" />
      <circle cx="2125" cy="468" r="3" stroke={SYM} fill="none" />
      <T x={2147} y={453}>SW1</T>
      <T x={2147} y={467}>SW_Push</T>
      <Gnd x={1983} y={535} />

      <PowerLeft x={902} y={996} name="VD5P0+" />
      <W d="M902 996H939V1024M1137 996H1400V1054M1137 1024H1187V1054" />
      <LedResistor y={996} />
      <LedResistor y={1024} />
      <Dot x={939} y={996} />
      <circle cx="1095" cy="1011" r="26" fill={BODY} stroke={SYM} />
      <LedHalf y={996} />
      <LedHalf y={1024} />
      <path d="M1106 982l9 -9M1110 973h5v5M1114 988l8 -9M1117 979h5v5" stroke={SYM} fill="none" />
      <T x={1060} y={995} a="middle" c={PIN}>1</T>
      <T x={1127} y={995} a="middle" c={PIN}>2</T>
      <T x={1060} y={1023} a="middle" c={PIN}>3</T>
      <T x={1127} y={1023} a="middle" c={PIN}>4</T>
      <T x={1094} y={951} a="middle">D1</T>
      <T x={1094} y={965} a="middle">3FG4HD-T2</T>
      <T x={981} y={965} a="middle">R1</T>
      <T x={981} y={979} a="middle">1608/510/5%</T>
      <T x={981} y={1050} a="middle">1608/510/5%</T>
      <T x={981} y={1064} a="middle">R2</T>

      <PowerLeft x={1087} y={1081} name="VD5P0+" />
      <PowerLeft x={1322} y={1081} name="VD3P3+" />
      <W d="M1087 1081H1131M1322 1081H1344" />
      <Transistor dx={0} name="Q1" />
      <Transistor dx={213} name="Q2" />
    </svg>
  );
}

/* ------------------------------------------------------------------ */
/* Panels and window                                                   */
/* ------------------------------------------------------------------ */

const menus = ["파일 (F)", "편집 (E)", "보기 (V)", "배치 (P)", "검사 (I)", "도구 (T)", "설정 (r)", "도움말 (H)"];
const sheets = ["power (페이지 2)", "connector (페이지 3)", "Sensor (페이지 4)", "wifi (페이지 5)", "LCD (페이지 6)"];

function PanelHeader({ title }: { title: string }) {
  return (
    <div className="flex h-[26px] shrink-0 items-center justify-between bg-[#bababa] pr-2 pb-0.5 pl-1">
      <h2>{title}</h2>
      <button type="button" aria-label={`${title} 닫기`} className="flex size-3 items-center justify-center">
        <svg viewBox="0 0 8 8" className="size-2" stroke="#000" strokeWidth={1.5} aria-hidden="true">
          <path d="M0 .5l8 7M8 .5L0 7.500" />
        </svg>
      </button>
    </div>
  );
}

function HierarchyPanel() {
  return (
    <section className="flex h-[609px] shrink-0 flex-col border border-[#a0a0a0]">
      <PanelHeader title="회로도 계층" />
      <div className="flex-1 border border-[#828790] bg-white pl-[6px]">
        <div className="flex h-[22px] items-center gap-[7px]">
          <span className="size-[13px] rounded-full bg-[#b9b9b9]" />
          <span>루트 (페이지 1)</span>
        </div>
        <ul className="ml-1.5">
          {sheets.map((s, i) => (
            <li key={s} className="flex h-[22px] items-center">
              <span className={i === sheets.length - 1 ? "h-[11px] self-start border-l border-dotted border-[#808080]" : "h-full border-l border-dotted border-[#808080]"} />
              <span className="w-3 border-t border-dotted border-[#808080]" />
              <span className={i === 0 ? "size-[13px] rounded-full bg-[#1a81c4]" : "size-[13px] rounded-full bg-[#b9b9b9]"} />
              <button type="button" className={i === 0 ? "ml-1 h-[22px] bg-[#f0f0f0] px-0.5 font-bold" : "ml-1 h-[22px] px-0.5"}>
                {s}
              </button>
            </li>
          ))}
        </ul>
      </div>
    </section>
  );
}

function PropertiesPanel() {
  return (
    <section className="flex flex-1 flex-col border border-[#a0a0a0] bg-[#f0f0f0]">
      <PanelHeader title="속성" />
      <p className="flex h-[31px] shrink-0 items-center pb-0.5 pl-1.5">선택한 객체가 없습니다</p>
      <div className="flex-1 border border-[#a0a0a0] bg-white" />
    </section>
  );
}

export default function App() {
  return (
    <div className="flex h-screen flex-col overflow-hidden bg-[#f0f0f0] font-['Noto_Sans_CJK_KR',sans-serif] text-[15px] leading-5 text-black">
      <header className="flex h-[29px] shrink-0 items-center bg-white pr-[3px]">
        <svg viewBox="0 0 20 20" className="ml-0.5 size-5" fill="none" stroke={D} strokeWidth={2} aria-hidden="true">
          <rect width="20" height="20" rx="3" fill={TAN} stroke="none" />
          <path d="M9 0v6" stroke={R} />
          <path d="M10 7.500h8" stroke={R} strokeWidth={2.500} />
          <path d="M9 6v5M0 11h8M5 8v7M10 15h8M10 11v9M10 13l6-2" />
        </svg>
        <h1 className="ml-[5px] flex-1">power [Weather_Sensor/power] — 회로도 편집기</h1>
        <button type="button" aria-label="최소화" className="flex h-full w-[59px] items-center justify-center">
          <svg viewBox="0 0 12 12" className="size-3" stroke="#000" aria-hidden="true"><path d="M0 6h12" shapeRendering="crispEdges" /></svg>
        </button>
        <button type="button" aria-label="이전 크기로" className="flex h-full w-[59px] items-center justify-center">
          <svg viewBox="0 0 13 13" className="size-[13px]" stroke="#000" fill="none" aria-hidden="true"><path d="M1 4h8v8H1zM4 4V1h8v8H9" /></svg>
        </button>
        <button type="button" aria-label="닫기" className="flex h-full w-[59px] items-center justify-center">
          <svg viewBox="0 0 12 12" className="size-3" stroke="#000" aria-hidden="true"><path d="M0 0l12 12M12 0L0 12" /></svg>
        </button>
      </header>

      <nav className="flex h-[23px] shrink-0 items-center gap-[17px] bg-white pl-[7px]" aria-label="메뉴">
        {menus.map((m) => (
          <button key={m} type="button">{m}</button>
        ))}
      </nav>

      <div role="toolbar" aria-label="주 도구" className="flex h-[46px] shrink-0 items-center pt-0.5 pl-1">
        {topTools.map((t, i) =>
          t ? (
            <button key={i} type="button" aria-label={t[1]} className="flex h-10 w-[41px] shrink-0 items-center justify-center">
              <Ico>{icons[t[0]]}</Ico>
            </button>
          ) : (
            <div key={i} className="mx-1 h-[34px] w-px shrink-0 bg-[#8c8c8c]" />
          ),
        )}
      </div>

      <main className="flex min-h-0 flex-1">
        <aside className="flex w-[377px] shrink-0 flex-col gap-[5px] bg-[#dcdcdc]">
          <HierarchyPanel />
          <PropertiesPanel />
        </aside>
        <div className="w-[5px] shrink-0 bg-[#dcdcdc]" />
        <SideBar tools={leftTools} label="보기 도구" />
        <div className="min-w-0 flex-1 border border-[#a0a0a0] bg-[#f5f4ef]">
          <Schematic />
        </div>
        <SideBar tools={rightTools} label="그리기 도구" />
      </main>

      <div className="h-10 shrink-0 border-t border-[#dcdcdc]" />

      <footer className="flex h-7 shrink-0 items-center border-t border-[#d7d7d7] whitespace-pre">
        <div className="h-6 flex-1" />
        <div className="h-6 w-[100px] border-l border-[#d7d7d7] pl-1">Z 1.56</div>
        <div className="h-6 w-[209px] border-l border-[#d7d7d7] pl-1">X 1650.00  Y 1450.00</div>
        <div className="h-6 w-[330px] border-l border-[#d7d7d7] pl-1">dx 1650.00  dy 1450.00  dist 2196.59</div>
        <div className="h-6 w-[241px] border-l border-[#d7d7d7] pl-1">그리드 50.00</div>
        <div className="h-6 w-[67px] border-l border-[#d7d7d7] pl-1">mils</div>
        <div className="h-6 w-[222px] border-l border-[#d7d7d7]" />
        <div className="h-6 w-[249px] border-l border-[#d7d7d7]" />
      </footer>
    </div>
  );
}
